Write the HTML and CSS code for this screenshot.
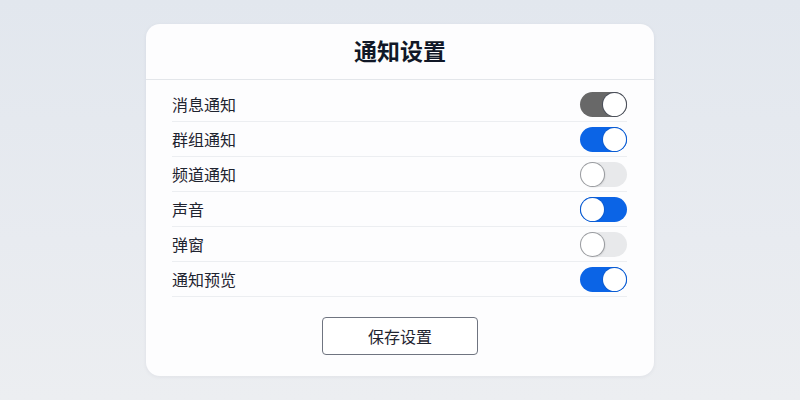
FILE: index.html
```html
<!DOCTYPE html>
<html lang="zh-CN">
<head>
<meta charset="utf-8">
<title>通知设置</title>
<link rel="stylesheet" href="styles.css">
</head>
<body>
<main class="page">
  <section class="card">
    <header class="card-header"><h1 class="title">通知设置</h1></header>
    <ul class="list">
      <li class="row"><span class="label">消息通知</span><span class="toggle toggle-grey"><span class="knob"></span></span></li>
      <li class="row"><span class="label">群组通知</span><span class="toggle toggle-on"><span class="knob"></span></span></li>
      <li class="row"><span class="label">频道通知</span><span class="toggle toggle-off"><span class="knob"></span></span></li>
      <li class="row"><span class="label">声音</span><span class="toggle toggle-on-left"><span class="knob"></span></span></li>
      <li class="row"><span class="label">弹窗</span><span class="toggle toggle-off"><span class="knob"></span></span></li>
      <li class="row"><span class="label">通知预览</span><span class="toggle toggle-on"><span class="knob"></span></span></li>
    </ul>
    <div class="actions"><button class="btn" type="button">保存设置</button></div>
  </section>
</main>
</body>
</html>
```
FILE: styles.css
```css
* { box-sizing: border-box; }
html, body { margin: 0; padding: 0; }
body {
  width: 800px;
  height: 400px;
  overflow: hidden;
  font-family: "Noto Sans CJK SC", "Noto Sans", sans-serif;
  background: linear-gradient(180deg, #e2e7ee 0%, #e8ebf0 60%, #eceef1 100%);
}
.page {
  display: flex;
  justify-content: center;
  padding-top: 24px;
}
.card {
  width: 508px;
  height: 352px;
  background: #fdfdfe;
  border-radius: 14px;
  box-shadow: 0 1px 4px rgba(30, 40, 60, 0.06);
  display: flex;
  flex-direction: column;
}
.card-header {
  height: 56px;
  border-bottom: 1px solid #e3e6ea;
  display: flex;
  align-items: center;
  justify-content: center;
}
.title {
  margin: 0;
  font-size: 23px;
  font-weight: 700;
  color: #111827;
  line-height: 1;
  padding-bottom: 2px;
}
.list {
  list-style: none;
  margin: 0;
  padding: 7px 27px 0 26px;
}
.row {
  height: 35px;
  border-bottom: 1px solid #eceef1;
  display: flex;
  align-items: center;
  justify-content: space-between;
}
.label {
  font-size: 16px;
  color: #1f2430;
  line-height: 1;
}
.toggle {
  width: 47px;
  height: 25px;
  border-radius: 13px;
  position: relative;
  display: block;
}
.knob {
  position: absolute;
  top: 1px;
  width: 23px;
  height: 23px;
  border-radius: 50%;
  background: #ffffff;
}
.toggle-grey { background: #686868; }
.toggle-grey .knob { right: 1px; box-shadow: 0 0 0 1px #4a4f5a; }
.toggle-on { background: #0b64e6; }
.toggle-on .knob { right: 1px; box-shadow: 0 0 0 1px #0b5bd0; }
.toggle-on-left { background: #0b64e6; }
.toggle-on-left .knob { left: 1px; box-shadow: 0 0 0 1px #0b5bd0; }
.toggle-off { background: #e8e9eb; }
.toggle-off .knob { left: 1px; box-shadow: 0 0 0 1px #9a9ca0, 1px 1px 2px rgba(0,0,0,0.15); }
.actions {
  display: flex;
  justify-content: center;
  padding-top: 20px;
}
.btn {
  width: 156px;
  height: 38px;
  background: #ffffff;
  border: 1.5px solid #6f7480;
  border-radius: 4px;
  font-family: "Noto Sans CJK SC", "Noto Sans", sans-serif;
  font-size: 16px;
  color: #1f2430;
  padding: 0;
}
```
